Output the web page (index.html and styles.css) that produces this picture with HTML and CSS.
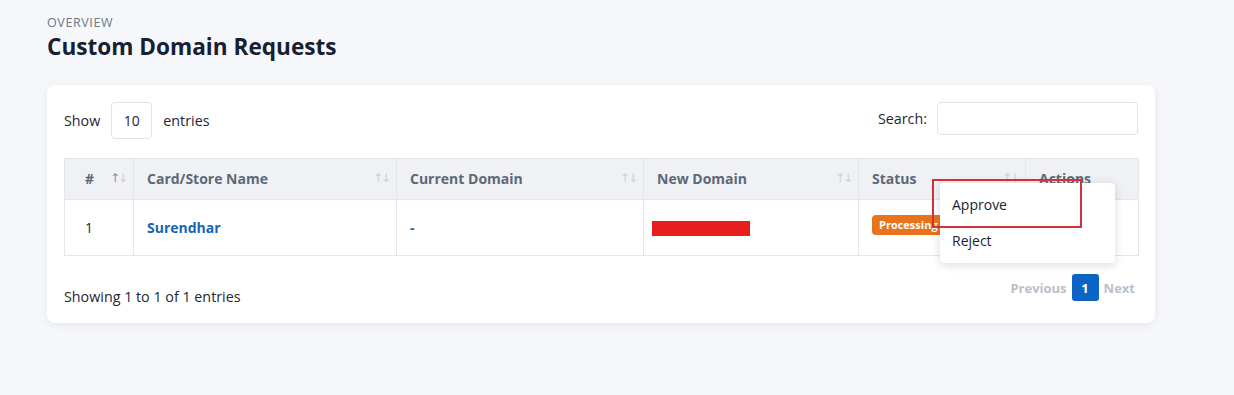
FILE: index.html
```html
<!DOCTYPE html>
<html>
<head>
<meta charset="utf-8">
<link rel="stylesheet" href="styles.css">
</head>
<body>
<div class="page">
  <div class="eyebrow">OVERVIEW</div>
  <h1 class="title">Custom Domain Requests</h1>
  <div class="card">
    <div class="toolbar">
      <div class="length">
        <span>Show</span>
        <span class="select">10</span>
        <span>entries</span>
      </div>
      <div class="search">
        <span>Search:</span>
        <span class="input"></span>
      </div>
    </div>
    <table class="grid">
      <colgroup>
        <col style="width:69px"><col style="width:263px"><col style="width:247px"><col style="width:215px"><col style="width:167px"><col style="width:113px">
      </colgroup>
      <thead>
        <tr>
          <th class="c-num"><span>#</span><span class="sort"><i class="up on">↑</i><i class="dn">↓</i></span></th>
          <th><span>Card/Store Name</span><span class="sort"><i class="up">↑</i><i class="dn">↓</i></span></th>
          <th><span>Current Domain</span><span class="sort"><i class="up">↑</i><i class="dn">↓</i></span></th>
          <th><span>New Domain</span><span class="sort"><i class="up">↑</i><i class="dn">↓</i></span></th>
          <th><span>Status</span><span class="sort"><i class="up">↑</i><i class="dn">↓</i></span></th>
          <th><span>Actions</span></th>
        </tr>
      </thead>
      <tbody>
        <tr>
          <td class="c-num">1</td>
          <td><a class="link">Surendhar</a></td>
          <td><a class="link">-</a></td>
          <td><span class="redact"></span></td>
          <td><span class="badge">Processing</span></td>
          <td></td>
        </tr>
      </tbody>
    </table>
    <div class="footer">
      <div class="info">Showing 1 to 1 of 1 entries</div>
      <div class="pager">
        <span class="pg disabled">Previous</span>
        <span class="pg current">1</span>
        <span class="pg disabled">Next</span>
      </div>
    </div>
    <div class="menu">
      <div class="item">Approve</div>
      <div class="item">Reject</div>
    </div>
    <div class="highlight"></div>
  </div>
</div>
</body>
</html>
```
FILE: styles.css
```css
* { box-sizing: border-box; }
html, body { margin: 0; padding: 0; }
body {
  background: #f5f7fb;
  font-family: "Open Sans", "Noto Sans", sans-serif;
  color: #1f2633;
  width: 1234px;
  height: 395px;
  overflow: hidden;
}
.page { padding: 15px 0 0 47px; }
.eyebrow {
  font-size: 12.5px;
  line-height: 16px;
  color: #6c7889;
  letter-spacing: 0.6px;
}
.title {
  margin: 1px 0 0 0;
  font-size: 22.6px;
  line-height: 30px;
  font-weight: 700;
  color: #172030;
}
.card {
  position: relative;
  margin-top: 23px;
  width: 1108px;
  height: 238px;
  background: #fff;
  border-radius: 8px;
  box-shadow: 0 2px 8px rgba(30, 40, 60, 0.08);
  padding: 17px 17px 0 17px;
}
.toolbar {
  display: flex;
  justify-content: space-between;
  align-items: flex-start;
  height: 56px;
}
.length, .search {
  display: flex;
  align-items: center;
  gap: 11px;
  font-size: 14.3px;
  color: #1f2633;
}
.select {
  display: inline-flex;
  align-items: center;
  justify-content: center;
  width: 41px;
  height: 37px;
  border: 1px solid #dfe3e8;
  border-radius: 4px;
  font-size: 14px;
}
.search { gap: 10px; }
.input {
  display: block;
  width: 201px;
  height: 33px;
  border: 1px solid #dfe3e8;
  border-radius: 4px;
}
.grid {
  width: 1074px;
  border-collapse: collapse;
  table-layout: fixed;
  font-size: 14px;
}
.grid th, .grid td {
  border: 1px solid #e3e6eb;
  text-align: left;
}
.grid th {
  background: #eff1f5;
  height: 41px;
  padding: 0 10px 1px 13px;
  font-weight: 700;
  color: #5d6878;
  position: relative;
}
.grid th .sort {
  position: absolute;
  right: 7px;
  top: 11px;
  font-family: "DejaVu Sans", sans-serif;
  font-weight: 400;
  font-size: 12px;
  line-height: 16px;
  color: #cbd0d8;
  display: flex;
  letter-spacing: -2px;
}
.grid th .sort i { font-style: normal; }
.grid th .sort i.on { color: #8a93a0; }
.grid td {
  height: 56px;
  padding: 0 13px;
  color: #1f2633;
}
.grid .c-num { padding-left: 20px; }
.link {
  color: #1565b4;
  font-weight: 700;
}
.redact {
  display: inline-block;
  width: 98px;
  height: 15px;
  background: #e61e1e;
  vertical-align: middle;
  margin-left: -5px;
  position: relative;
  top: -1px;
}
.badge {
  display: inline-block;
  background: #e9731c;
  color: #fff;
  font-size: 11px;
  font-weight: 700;
  line-height: 20px;
  padding: 0 7px;
  border-radius: 4px;
  position: relative;
  top: -3px;
}
.footer {
  display: flex;
  justify-content: space-between;
  align-items: center;
  margin-top: 18px;
}
.info { font-size: 14.3px; color: #1f2633; position: relative; top: 9px; }
.pager {
  display: flex;
  align-items: center;
  gap: 5px;
  font-size: 13px;
  font-weight: 700;
  margin-right: 3px;
}
.pg.disabled { color: #b8c0cb; }
.pg.current {
  display: inline-flex;
  align-items: center;
  justify-content: center;
  width: 27px;
  height: 27px;
  background: #0b64c5;
  color: #fff;
  border-radius: 3px;
}
.menu {
  position: absolute;
  left: 893px;
  top: 98px;
  width: 175px;
  height: 80px;
  background: #fff;
  border-radius: 4px;
  box-shadow: 0 2px 10px rgba(20, 30, 50, 0.16);
  padding: 4px 0;
}
.menu .item {
  height: 36px;
  line-height: 36px;
  padding-left: 12px;
  font-size: 14px;
  color: #1b2230;
}
.highlight {
  position: absolute;
  left: 885px;
  top: 94px;
  width: 150px;
  height: 49px;
  border: 2px solid #d4303a;
}
```
